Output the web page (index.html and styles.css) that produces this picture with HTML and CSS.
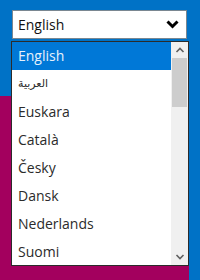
FILE: index.html
```html
<!DOCTYPE html>
<html lang="en">
<head>
    <meta charset="UTF-8">
    <title>Language</title>
    <link rel="stylesheet" href="styles.css">
</head>
<body>

<div class="top">
    <div class="select">
        <span>English</span>
        <svg class="chevron" width="13" height="9" viewBox="0 0 13 9">
            <path d="M1.5 1.5 L6.5 6.5 L11.5 1.5" fill="none" stroke="#000" stroke-width="3"/>
        </svg>
    </div>
</div>

<div class="panel"></div>

<div class="dropdown">
    <div class="options">
        <div class="option selected">English</div>
        <div class="option arabic" lang="ar">العربية</div>
        <div class="option">Euskara</div>
        <div class="option">Català</div>
        <div class="option">Česky</div>
        <div class="option">Dansk</div>
        <div class="option">Nederlands</div>
        <div class="option">Suomi</div>
    </div>
    <div class="scrollbar">
        <svg class="arrow" width="10" height="6" viewBox="0 0 10 6">
            <path d="M1.5 5 L5 1.5 L8.5 5" fill="none" stroke="#606060" stroke-width="1.6"/>
        </svg>
        <div class="thumb"></div>
        <div class="track"></div>
        <svg class="arrow" width="10" height="6" viewBox="0 0 10 6">
            <path d="M1.5 1 L5 4.5 L8.5 1" fill="none" stroke="#606060" stroke-width="1.6"/>
        </svg>
    </div>
</div>

</body>
</html>
```

FILE: styles.css
```css
* {
    margin: 0;
    padding: 0;
    box-sizing: border-box;
}

body {
    width: 200px;
    height: 280px;
    overflow: hidden;
    position: relative;
    background: #0072c6;
    font-family: "Open Sans", sans-serif;
    font-size: 14px;
    color: #222;
}

.top {
    padding: 10px 0 0 12px;
}

.select {
    width: 175px;
    height: 29px;
    background: #fff;
    border: 1px solid #7a8791;
    display: flex;
    align-items: center;
    justify-content: space-between;
    padding: 0 7px 0 5px;
    color: #111;
}

.chevron {
    display: block;
}

.panel {
    margin-top: 57px;
    width: 189px;
    height: 184px;
    background: #a3005e;
}

.dropdown {
    position: absolute;
    left: 11px;
    top: 41px;
    width: 178px;
    height: 225px;
    border: 1px solid #2b2b2b;
    background: #fff;
    display: flex;
    overflow: hidden;
}

.options {
    flex: 1;
}

.option {
    height: 28px;
    line-height: 28px;
    padding-left: 6px;
    color: #2b2b2b;
}

.option.selected {
    background: #0078d7;
    color: #e6f1fb;
}

.option.arabic {
    font-family: "DejaVu Sans", sans-serif;
    font-size: 11px;
}

.scrollbar {
    width: 17px;
    background: #f0f0f0;
    display: flex;
    flex-direction: column;
    align-items: center;
}

.arrow {
    display: block;
    margin: 5px 0;
}

.thumb {
    width: 15px;
    height: 49px;
    background: #cdcdcd;
}

.track {
    flex: 1;
}
```
